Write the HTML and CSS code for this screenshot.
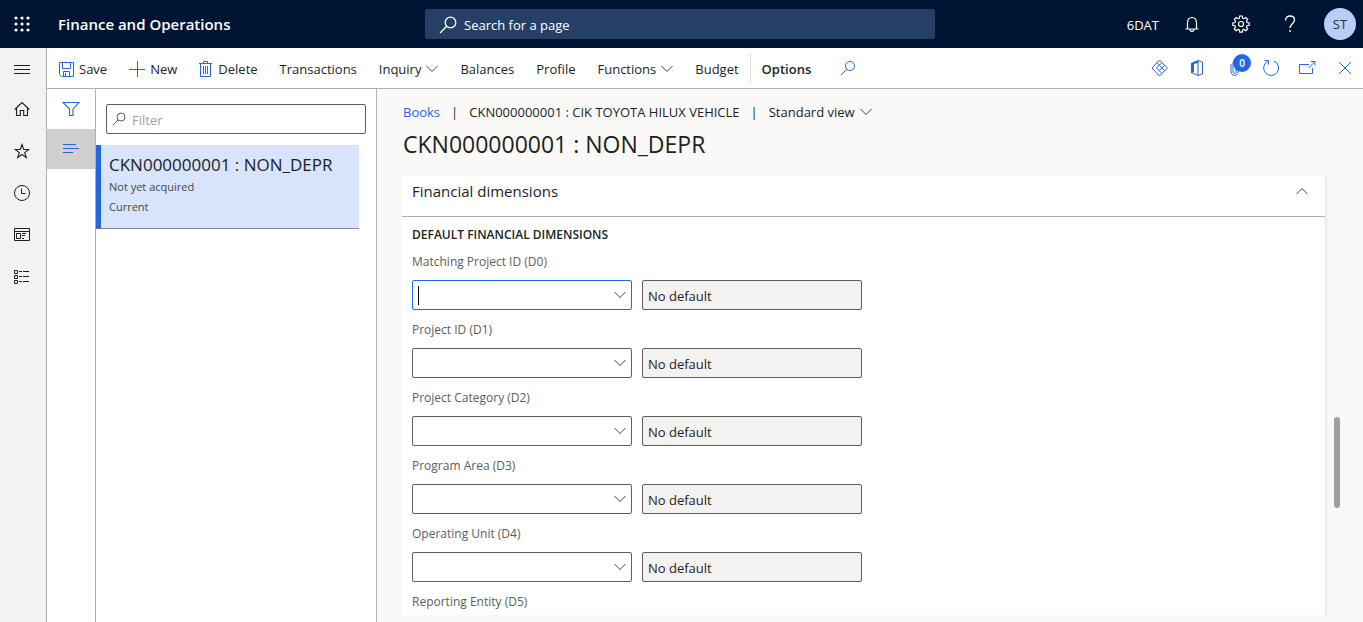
FILE: index.html
```html
<!DOCTYPE html>
<html lang="en">
<head>
<meta charset="utf-8">
<title>Finance and Operations</title>
<link rel="stylesheet" href="styles.css">
</head>
<body>
<header class="topbar">
  <button class="waffle" aria-label="App launcher">
    <svg width="16" height="16" viewBox="0 0 16 16" fill="currentColor"><circle cx="2" cy="2" r="1.6"/><circle cx="8" cy="2" r="1.6"/><circle cx="14" cy="2" r="1.6"/><circle cx="2" cy="8" r="1.6"/><circle cx="8" cy="8" r="1.6"/><circle cx="14" cy="8" r="1.6"/><circle cx="2" cy="14" r="1.6"/><circle cx="8" cy="14" r="1.6"/><circle cx="14" cy="14" r="1.6"/></svg>
  </button>
  <span class="brand">Finance and Operations</span>
  <label class="search">
    <svg width="18" height="18" viewBox="0 0 18 18" fill="none" stroke="currentColor" stroke-width="1.3"><circle cx="11.5" cy="6.5" r="5.3"/><path d="M7.7 10.3 1 17"/></svg>
    <input type="text" placeholder="Search for a page" aria-label="Search for a page">
  </label>
  <div class="top-actions">
    <button class="company">6DAT</button>
    <button class="top-icon" aria-label="Notifications"><svg width="14" height="16" viewBox="0 0 14 16" fill="none" stroke="currentColor" stroke-width="1.2"><path d="M2.5 13V7C2.500 3.500 4.500 1.500 7 1.500s4.500 2 4.500 5.500v6M.5 13h13M5 13.500c0 2.500 4 2.500 4 0"/></svg></button>
    <button class="top-icon" aria-label="Settings"><svg width="18" height="18" viewBox="0 0 18 18" fill="none" stroke="currentColor" stroke-width="1.2"><path d="M7.700 1h2.600l.4 2.200 1.300.5 1.900-1.200 1.800 1.800-1.200 1.900.5 1.300 2.200.4v2.400l-2.200.4-.5 1.300 1.200 1.900-1.800 1.800-1.900-1.200-1.300.5-.4 2.200H7.700l-.4-2.200-1.300-.5-1.900 1.200-1.800-1.800 1.200-1.900-.5-1.300-2.200-.4V7.900l2.200-.4.500-1.300-1.200-1.900 1.800-1.800L6 3.700l1.300-.5z"/><circle cx="9" cy="9" r="2.500"/></svg></button>
    <button class="top-icon" aria-label="Help"><svg width="12" height="18" viewBox="0 0 12 18" fill="none" stroke="currentColor" stroke-width="1.3"><path d="M1.500 5.500C1.500 2.700 3.500 1 6 1s4.500 1.600 4.500 4c0 3.500-4.500 4-4.500 8M6 15v2"/></svg></button>
    <button class="avatar" aria-label="Account">ST</button>
  </div>
</header>
<div class="shell">
  <nav class="rail" aria-label="Main">
    <button aria-label="Expand navigation"><svg width="16" height="12" viewBox="0 0 16 12" stroke="currentColor"><path d="M0 2.500h16M0 6.500h16M0 10.500h16"/></svg></button>
    <button aria-label="Home"><svg width="16" height="16" viewBox="0 0 16 16" fill="none" stroke="currentColor" stroke-width="1.1"><path d="M.7 8.500 8 1.500l7.300 7M2.500 7v7.500h3.800v-5h3.400v5h3.800V7"/></svg></button>
    <button aria-label="Favorites"><svg width="16" height="16" viewBox="0 0 16 16" fill="none" stroke="currentColor" stroke-width="1.1"><path d="m8 1.500 1.700 5h5.200l-4.200 3.100 1.600 5L8 11.500l-4.300 3.100 1.600-5L1.100 6.500h5.200z"/></svg></button>
    <button aria-label="Recent"><svg width="18" height="18" viewBox="0 0 18 18" fill="none" stroke="currentColor"><circle cx="9" cy="9" r="7.500"/><path d="M8.500 4.500v5h4"/></svg></button>
    <button aria-label="Workspaces"><svg width="16" height="14" viewBox="0 0 16 14" fill="none" stroke="currentColor"><path d="M.5.500h15v12H.5zM.5 3.500h15M2.500 5.500h4v5h-4zM8 5.500h4M8 7.500h3M8 10.500h2"/></svg></button>
    <button aria-label="Modules"><svg width="16" height="14" viewBox="0 0 16 14" fill="none" stroke="currentColor"><path d="M.5.500h3v3h-3zM.5 5.500h3v3h-3zM.5 10.500h3v3h-3zM5 1.500h3m1 0h6M5 6.500h3m1 0h6M5 11.500h3m1 0h6"/></svg></button>
  </nav>
  <div class="workspace">
    <div class="toolbar">
      <button class="command"><svg width="15" height="15" viewBox="0 0 15 15" fill="none" stroke="currentColor"><path d="M.5.500h14v14h-12l-2-2zM3.500.500v6h8v-6M4.500 14V9.500h6V14M6.500 11v3"/></svg><span>Save</span></button>
      <button class="command"><svg width="16" height="16" viewBox="0 0 16 16" stroke="currentColor"><path d="M0 8.500h16M8.500 0v16"/></svg><span>New</span></button>
      <button class="command"><svg width="14" height="16" viewBox="0 0 14 16" fill="none" stroke="currentColor"><path d="M0 2.500h13M4.500 2V.500h4V2M1.500 3v12.500h10V3M4.500 5v8M6.500 5v8M8.500 5v8"/></svg><span>Delete</span></button>
      <button class="command">Transactions</button>
      <button class="command">Inquiry <svg class="chevron" width="12" height="8" viewBox="0 0 12 8"><path d="m.5 1 5.500 5.500L11.500 1"/></svg></button>
      <button class="command">Balances</button>
      <button class="command">Profile</button>
      <button class="command">Functions <svg class="chevron" width="12" height="8" viewBox="0 0 12 8"><path d="m.5 1 5.500 5.500L11.500 1"/></svg></button>
      <button class="command">Budget</button>
      <button class="command options">Options</button>
      <button class="command find" aria-label="Search actions"><svg width="16" height="16" viewBox="0 0 16 16" fill="none" stroke="currentColor"><circle cx="10" cy="6" r="4.500"/><path d="M6.800 9.200 1 15"/></svg></button>
      <div class="tools">
        <button aria-label="Power Apps"><svg width="18" height="16" viewBox="0 0 18 16" fill="none" stroke="currentColor"><path d="M11 2.500 16.500 8 11 13.500 5.500 8zM8.300 5.200l5.500 5.500M13.700 5.200l-5.500 5.500M11 2.500 9.500.800H7.500L1 8l6.500 7.200h2L11 13.500M8.300 5.200 6 3"/></svg></button>
        <button aria-label="Open in Office"><svg width="14" height="16" viewBox="0 0 14 16" fill="none" stroke="currentColor"><path fill="currentColor" stroke="none" d="M8 0v3L4 4v8l-2 1-1-1V3z"/><path d="M1 12.500 8 15.500l4.500-1.500V2L8 .500v15"/></svg></button>
        <button class="attach" aria-label="Attachments, 0"><svg width="10" height="16" viewBox="0 0 10 16" fill="none" stroke="currentColor"><path d="M1 4v8c0 4.500 7 4.500 7 0V3c0-3-5-3-5 0v9c0 2 3 2 3 0V4"/></svg><span class="badge">0</span></button>
        <button aria-label="Refresh"><svg width="18" height="18" viewBox="0 0 18 18" fill="none" stroke="currentColor"><path d="M12 2a7.500 7.500 0 1 1-6.500.4M2.500 1.500h4v4"/></svg></button>
        <button aria-label="Open in new window"><svg width="17" height="14" viewBox="0 0 17 14" fill="none" stroke="currentColor"><path d="M10 3.500H.5v9h13V7M9.500 7l6-6M12 .500h4v4"/></svg></button>
        <button aria-label="Close"><svg width="14" height="14" viewBox="0 0 14 14" stroke="currentColor"><path d="m1 1 12 12M13 1 1 13"/></svg></button>
      </div>
    </div>
    <div class="panes">
      <div class="pane-tabs">
        <button aria-label="Show filters"><svg width="18" height="16" viewBox="0 0 18 16" fill="none" stroke="currentColor" stroke-width="1.1"><path d="M1 1.500h16l-6 6.500v6.500H7.500V8z"/></svg></button>
        <button class="selected" aria-label="Show list"><svg width="16" height="10" viewBox="0 0 16 10" stroke="currentColor"><path d="M0 .5h13M0 4.500h16M0 8.500h10"/></svg></button>
      </div>
      <aside class="list">
        <label class="filter">
          <svg width="14" height="14" viewBox="0 0 14 14" fill="none" stroke="currentColor"><circle cx="9" cy="5" r="4"/><path d="M6.200 7.800 1 13"/></svg>
          <input type="text" placeholder="Filter" aria-label="Filter">
        </label>
        <a href="#book" class="book">
          <span class="book-title">CKN000000001 : NON_DEPR</span>
          <span class="book-line">Not yet acquired</span>
          <span class="book-line">Current</span>
        </a>
      </aside>
      <main class="content">
        <div class="crumbs">
          <a href="#books">Books</a><span class="bar">|</span><span>CKN000000001 : CIK TOYOTA HILUX VEHICLE</span><span class="bar">|</span><button class="view">Standard view <svg class="chevron" width="12" height="8" viewBox="0 0 12 8"><path d="m.5 1 5.500 5.500L11.500 1"/></svg></button>
        </div>
        <h1>CKN000000001 : NON_DEPR</h1>
        <div class="viewport">
          <section class="card">
            <h2><button class="card-head">Financial dimensions <svg class="chevron" width="12" height="8" viewBox="0 0 12 8"><path d="m.5 7 5.500-5.500L11.500 7"/></svg></button></h2>
            <form class="fields">
              <h3>DEFAULT FINANCIAL DIMENSIONS</h3>
              <div class="field">
                <label for="d0">Matching Project ID (D0)</label>
                <div class="pair"><div class="combo active"><input id="d0" type="text" role="combobox" aria-expanded="false"><span class="caret"></span><button type="button" aria-label="Open Matching Project ID"><svg class="chevron" width="12" height="8" viewBox="0 0 12 8"><path d="m.5 1 5.500 5.500L11.500 1"/></svg></button></div><input class="readonly" type="text" value="No default" readonly aria-label="Matching Project ID description"></div>
              </div>
              <div class="field">
                <label for="d1">Project ID (D1)</label>
                <div class="pair"><div class="combo"><input id="d1" type="text" role="combobox" aria-expanded="false"><button type="button" aria-label="Open Project ID"><svg class="chevron" width="12" height="8" viewBox="0 0 12 8"><path d="m.5 1 5.500 5.500L11.500 1"/></svg></button></div><input class="readonly" type="text" value="No default" readonly aria-label="Project ID description"></div>
              </div>
              <div class="field">
                <label for="d2">Project Category (D2)</label>
                <div class="pair"><div class="combo"><input id="d2" type="text" role="combobox" aria-expanded="false"><button type="button" aria-label="Open Project Category"><svg class="chevron" width="12" height="8" viewBox="0 0 12 8"><path d="m.5 1 5.500 5.500L11.500 1"/></svg></button></div><input class="readonly" type="text" value="No default" readonly aria-label="Project Category description"></div>
              </div>
              <div class="field">
                <label for="d3">Program Area (D3)</label>
                <div class="pair"><div class="combo"><input id="d3" type="text" role="combobox" aria-expanded="false"><button type="button" aria-label="Open Program Area"><svg class="chevron" width="12" height="8" viewBox="0 0 12 8"><path d="m.5 1 5.500 5.500L11.500 1"/></svg></button></div><input class="readonly" type="text" value="No default" readonly aria-label="Program Area description"></div>
              </div>
              <div class="field">
                <label for="d4">Operating Unit (D4)</label>
                <div class="pair"><div class="combo"><input id="d4" type="text" role="combobox" aria-expanded="false"><button type="button" aria-label="Open Operating Unit"><svg class="chevron" width="12" height="8" viewBox="0 0 12 8"><path d="m.5 1 5.500 5.500L11.500 1"/></svg></button></div><input class="readonly" type="text" value="No default" readonly aria-label="Operating Unit description"></div>
              </div>
              <div class="field">
                <label for="d5">Reporting Entity (D5)</label>
                <div class="pair"><div class="combo"><input id="d5" type="text" role="combobox" aria-expanded="false"></div></div>
              </div>
            </form>
          </section>
          <div class="thumb"></div>
        </div>
      </main>
    </div>
  </div>
</div>
</body>
</html>
```

FILE: styles.css
```css
* { box-sizing: border-box; }
body {
  margin: 0;
  height: 100vh;
  display: flex;
  flex-direction: column;
  overflow: hidden;
  font: 13px/20px "Open Sans", "Noto Sans", sans-serif;
  color: #201f1e;
  background: #faf9f8;
}
button, input { font: inherit; color: inherit; border: 0; padding: 0; background: none; outline: 0; }
input { min-width: 0; }
svg { display: block; flex: none; }
a { text-decoration: none; }
h1, h2, h3 { margin: 0; }

.topbar {
  flex: none;
  height: 48px;
  padding-right: 3px;
  display: grid;
  grid-template-columns: 1fr minmax(200px, 510px) 1fr;
  grid-template-areas: "brand search actions";
  align-items: center;
  background: #001433;
  color: #fff;
}
.waffle { grid-area: brand; margin-left: 14px; width: 16px; }
.brand { grid-area: brand; margin-left: 58px; font-size: 15px; font-weight: 600; white-space: nowrap; }
.search {
  grid-area: search;
  display: flex;
  align-items: center;
  gap: 7px;
  height: 30px;
  padding: 2px 0 0 14px;
  border-radius: 2px;
  background: #263f66;
}
.search input { flex: 1; }
.search input::placeholder { color: #fff; opacity: 1; }
.top-actions { grid-area: actions; display: flex; align-items: center; justify-content: flex-end; padding-right: 4px; }
.company { margin-right: 8px; padding-top: 2px; }
.top-icon { width: 49px; display: flex; justify-content: center; }
.avatar { width: 32px; height: 32px; margin-left: 10px; border-radius: 50%; background: #b8cdf8; color: #323130; }

.shell { flex: 1; display: flex; min-height: 0; }
.rail { flex: none; width: 47px; border-right: 1px solid #b3b0ad; background: #f3f2f1; display: flex; flex-direction: column; }
.rail button { height: 42px; display: flex; align-items: center; justify-content: center; padding-right: 3px; }
.rail button:first-child { height: 40px; padding-top: 2px; }

.workspace { flex: 1; min-width: 0; display: flex; flex-direction: column; }
.toolbar { flex: none; height: 41px; display: flex; align-items: center; padding-left: 1px; border-bottom: 1px solid #b3b0ad; background: #fff; }
.command { display: flex; align-items: center; gap: 5px; padding: 2px 11px 0; height: 30px; white-space: nowrap; }
.command svg, .tools { color: #2266e3; }
.chevron { fill: none; stroke: #444; stroke-width: 1; }
.options { border-left: 1px solid #e1dfdd; font-weight: 600; }
.find { margin-left: 7px; padding-top: 0; }
.tools { margin-left: auto; display: flex; align-items: center; }
.tools button { width: 37px; height: 40px; display: flex; align-items: center; justify-content: center; }
.tools .attach { position: relative; justify-content: flex-start; padding-left: 15px; }
.badge { position: absolute; left: 18px; top: 6px; width: 18px; height: 18px; border-radius: 50%; background: #2266e3; color: #fff; font-size: 10px; line-height: 18px; font-weight: 600; }

.panes { flex: 1; display: flex; min-height: 0; }
.pane-tabs { flex: none; width: 49px; border-right: 1px solid #b3b0ad; background: #fff; color: #2266e3; }
.pane-tabs button { width: 100%; height: 40px; display: flex; align-items: center; justify-content: center; }
.pane-tabs .selected { background: #d2d0ce; }
.list { flex: none; width: 281px; border-right: 1px solid #b3b0ad; background: #fff; padding-top: 15px; }
.filter { height: 30px; margin: 0 10px; display: flex; align-items: center; gap: 6px; padding-left: 5px; border: 1px solid #605e5c; border-radius: 2px; color: #605e5c; }
.filter input { flex: 1; padding-top: 2px; }
.filter input::placeholder { color: #a19f9d; opacity: 1; }
.book { display: flex; flex-direction: column; height: 84px; margin: 11px 17px 0 0; padding: 8px 0 0 8px; border-left: 5px solid #2266e3; border-bottom: 1px solid #8a8886; background: #d8e3fc; color: #201f1e; }
.book-title { font-size: 17px; line-height: 24px; font-weight: 500; white-space: nowrap; }
.book-line { font-size: 11px; line-height: 20px; color: #494847; }

.content { flex: 1; min-width: 0; display: flex; flex-direction: column; padding: 13px 0 7px 25px; }
.crumbs { display: flex; padding-left: 1px; white-space: nowrap; }
.crumbs a { color: #2266e3; }
.bar { margin: 0 11px; }
.view { display: flex; align-items: center; gap: 5px; }
h1 { padding-left: 1px; margin-top: 6px; font-size: 23px; line-height: 32px; font-weight: 500; }
.viewport { position: relative; flex: 1; min-height: 0; margin-top: 16px; overflow: hidden; }
.card { margin-right: 38px; background: #fff; box-shadow: 0 0 4px rgba(0, 0, 0, .16); }
.card-head { width: 100%; height: 41px; padding: 0 17px 10px 10px; display: flex; align-items: center; justify-content: space-between; border-bottom: 1px solid #b3b0ad; font-size: 15px; font-weight: 500; }
.fields { padding: 8px 10px; }
h3 { font-size: 12px; line-height: 20px; font-weight: 600; margin-bottom: 7px; }
.field { margin-bottom: 10px; }
.field label { display: block; margin-bottom: 8px; font-size: 12px; line-height: 20px; color: #605e5c; }
.pair { display: flex; gap: 10px; }
.combo { position: relative; width: 220px; height: 30px; display: flex; border: 1px solid #605e5c; border-radius: 2px; background: #fff; }
.combo.active { border-color: #2266e3; }
.combo input { flex: 1; padding-left: 5px; }
.combo button { width: 22px; display: flex; align-items: center; justify-content: center; }
.caret { position: absolute; left: 5px; top: 5px; width: 1px; height: 19px; background: #000; }
.readonly { width: 220px; height: 30px; padding: 2px 5px 0; border: 1px solid #605e5c; border-radius: 2px; background: #f3f2f1; }
.thumb { position: absolute; right: 23px; top: 55%; width: 6px; height: 91px; border-radius: 3px; background: #a19f9d; }
```
